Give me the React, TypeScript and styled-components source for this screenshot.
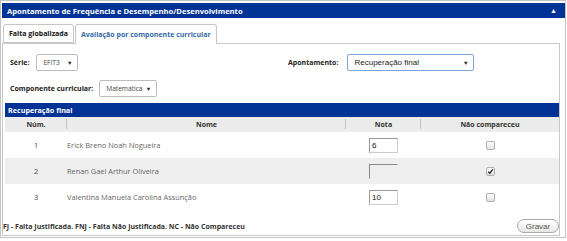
import styled, { createGlobalStyle } from "styled-components";

const GlobalStyle = createGlobalStyle`
  body {
    margin: 0;
    background: #fff;
    font-family: "Open Sans", "Liberation Sans", sans-serif;
  }
`;

const students = [
  { num: 1, name: "Erick Breno Noah Nogueira", nota: "6", disabled: false, absent: false },
  { num: 2, name: "Renan Gael Arthur Oliveira", nota: "", disabled: true, absent: true },
  { num: 3, name: "Valentina Manuela Carolina Assunção", nota: "10", disabled: false, absent: false },
];

const Panel = styled.div`
  box-sizing: border-box;
  width: 566px;
  height: 238px;
  border: 1px solid #c4c4c4;
  padding: 2px 0 0 1px;
`;

const TitleBar = styled.div`
  height: 15px;
  background: #013397;
  color: #fff;
  display: flex;
  align-items: center;
  justify-content: space-between;
  padding: 0 8px 0 5px;
  font-size: 7.6px;
  font-weight: 700;
`;

const CollapseIcon = styled.span`
  font-size: 7px;
  line-height: 1;
`;

const Tabs = styled.div`
  display: flex;
  margin-top: 6px;
  padding-left: 1px;
  position: relative;
  z-index: 1;
`;

const Tab = styled.div<{ $active?: boolean }>`
  box-sizing: border-box;
  height: ${(p) => (p.$active ? "20px" : "19px")};
  display: flex;
  align-items: center;
  padding: 0 5px;
  border: 1px solid #c6c6c6;
  border-bottom: ${(p) => (p.$active ? "none" : "1px solid #c6c6c6")};
  border-radius: 3px 3px 0 0;
  background: #fff;
  font-size: 7px;
  font-weight: 700;
  color: ${(p) => (p.$active ? "#3569a6" : "#111")};
  margin-right: 1px;
`;

const TabPanel = styled.div`
  box-sizing: border-box;
  width: 558px;
  height: 193px;
  margin-top: -1px;
  border: 1px solid #c8c8c8;
  display: flex;
  flex-direction: column;
`;

const Filters = styled.div`
  display: grid;
  grid-template-columns: 278px 1fr;
  row-gap: 9px;
  padding: 10px 0 0 7px;
`;

const Field = styled.div<{ $gap: number }>`
  display: flex;
  align-items: center;
  gap: ${(p) => p.$gap}px;
  height: 17px;
`;

const Label = styled.span`
  font-size: 7px;
  font-weight: 700;
  color: #222;
`;

const SelectBox = styled.div<{ $width: number; $focused?: boolean; $arial?: boolean }>`
  box-sizing: border-box;
  width: ${(p) => p.$width}px;
  height: 17px;
  display: flex;
  align-items: center;
  justify-content: space-between;
  padding: 0 5px 0 6px;
  border: 1px solid ${(p) => (p.$focused ? "#7fa3d8" : "#bdbdbd")};
  border-radius: 2px;
  background: #fff;
  font-family: ${(p) => (p.$arial ? '"Liberation Sans", Arial, sans-serif' : '"Open Sans", sans-serif')};
  font-size: ${(p) => (p.$arial ? "8px" : "6.6px")};
  color: ${(p) => (p.$arial ? "#222" : "#444")};
`;

const Arrow = styled.span`
  font-size: 5.5px;
  color: #222;
`;

const Section = styled.div`
  margin: 6px 0 0 2px;
`;

const SectionTitle = styled.div`
  height: 14px;
  background: #013397;
  color: #fff;
  font-size: 7.2px;
  font-weight: 700;
  display: flex;
  align-items: center;
  padding-left: 3px;
`;

const Table = styled.table`
  width: 100%;
  border-collapse: collapse;
  table-layout: fixed;
`;

const Th = styled.th<{ $width?: number; $divider?: boolean }>`
  width: ${(p) => (p.$width ? `${p.$width}px` : "auto")};
  height: 15px;
  padding: 0;
  background: #ececec;
  font-size: 7px;
  font-weight: 700;
  color: #333;
  text-align: center;
  position: relative;
  &::after {
    content: "";
    display: ${(p) => (p.$divider ? "block" : "none")};
    position: absolute;
    right: 0;
    top: 2px;
    height: 10px;
    border-right: 1px solid #c2c2c2;
  }
`;

const Row = styled.tr<{ $alt?: boolean }>`
  background: ${(p) => (p.$alt ? "#efefef" : "#fff")};
`;

const Td = styled.td<{ $align?: string }>`
  height: 26px;
  padding: 0;
  font-size: 7.4px;
  color: #666;
  text-align: ${(p) => p.$align ?? "center"};
`;

const NumCell = styled(Td)`
  color: #444;
`;

const NotaInput = styled.div<{ $disabled?: boolean }>`
  box-sizing: border-box;
  display: inline-flex;
  align-items: center;
  width: 29px;
  height: 15px;
  padding-left: 2px;
  vertical-align: middle;
  font-family: "Liberation Sans", Arial, sans-serif;
  font-size: 8px;
  color: #111;
  background: ${(p) => (p.$disabled ? "#efefef" : "#fff")};
  border: 1px solid #aaa;
  border-top-color: ${(p) => (p.$disabled ? "#888" : "#999")};
  border-left-color: ${(p) => (p.$disabled ? "#888" : "#999")};
  border-right-color: ${(p) => (p.$disabled ? "transparent" : "#ccc")};
  border-bottom-color: ${(p) => (p.$disabled ? "transparent" : "#ccc")};
`;

const Check = styled.span<{ $checked?: boolean }>`
  box-sizing: border-box;
  display: inline-flex;
  align-items: center;
  justify-content: center;
  width: 9px;
  height: 9px;
  vertical-align: middle;
  border: 1px solid #b0b0b0;
  border-radius: 2px;
  background: linear-gradient(#fdfdfd, #e2e2e2);
`;

const Footer = styled.div`
  display: flex;
  justify-content: space-between;
  align-items: center;
  padding: 9px 0 0 0;
`;

const Legend = styled.span`
  font-size: 7px;
  font-weight: 700;
  color: #333;
`;

const SaveButton = styled.button`
  box-sizing: border-box;
  width: 42px;
  height: 14px;
  padding: 0;
  border: 1px solid #a9a9a9;
  border-radius: 7px;
  background: linear-gradient(#ffffff, #e6e6e6);
  font-family: "Liberation Sans", Arial, sans-serif;
  font-size: 8px;
  color: #555;
`;

export default function App() {
  return (
    <>
      <GlobalStyle />
      <Panel>
        <TitleBar>
          <span>Apontamento de Frequência e Desempenho/Desenvolvimento</span>
          <CollapseIcon>▲</CollapseIcon>
        </TitleBar>
        <Tabs>
          <Tab>Falta globalizada</Tab>
          <Tab $active>Avaliação por componente curricular</Tab>
        </Tabs>
        <TabPanel>
          <Filters>
            <Field $gap={7}>
              <Label>Série:</Label>
              <SelectBox $width={42}>
                EFIT3 <Arrow>▼</Arrow>
              </SelectBox>
            </Field>
            <Field $gap={9}>
              <Label>Apontamento:</Label>
              <SelectBox $width={127} $focused $arial>
                Recuperação final <Arrow>▼</Arrow>
              </SelectBox>
            </Field>
            <Field $gap={6}>
              <Label>Componente curricular:</Label>
              <SelectBox $width={58}>
                Matematica <Arrow>▼</Arrow>
              </SelectBox>
            </Field>
          </Filters>
          <Section>
            <SectionTitle>Recuperação final</SectionTitle>
            <Table>
              <thead>
                <tr>
                  <Th $width={62} $divider>Núm.</Th>
                  <Th $width={279} $divider>Nome</Th>
                  <Th $width={75} $divider>Nota</Th>
                  <Th>Não compareceu</Th>
                </tr>
              </thead>
              <tbody>
                {students.map((s, i) => (
                  <Row key={s.num} $alt={i % 2 === 1}>
                    <NumCell>{s.num}</NumCell>
                    <Td $align="left">{s.name}</Td>
                    <Td>
                      <NotaInput $disabled={s.disabled}>{s.nota}</NotaInput>
                    </Td>
                    <Td>
                      <Check $checked={s.absent}>
                        {s.absent && (
                          <svg width="7" height="7" viewBox="0 0 7 7">
                            <path d="M1.2 3.8 L2.8 5.3 L5.8 1.4" stroke="#222" strokeWidth="1.3" fill="none" />
                          </svg>
                        )}
                      </Check>
                    </Td>
                  </Row>
                ))}
              </tbody>
            </Table>
          </Section>
          <Footer>
            <Legend>FJ - Falta Justificada. FNJ - Falta Não Justificada. NC - Não Compareceu</Legend>
            <SaveButton>Gravar</SaveButton>
          </Footer>
        </TabPanel>
      </Panel>
    </>
  );
}
